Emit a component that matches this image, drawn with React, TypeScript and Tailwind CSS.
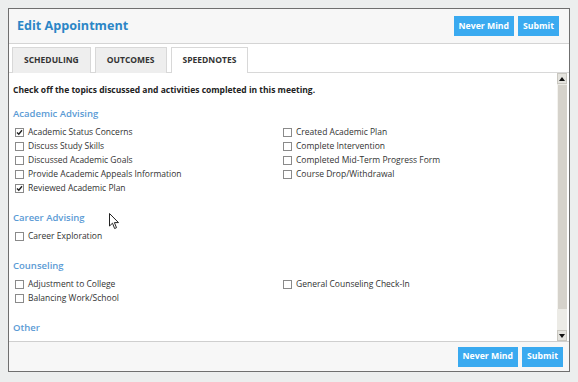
import React from 'react';

type Item = { label: string; checked?: boolean };

const academicLeft: Item[] = [
  { label: 'Academic Status Concerns', checked: true },
  { label: 'Discuss Study Skills' },
  { label: 'Discussed Academic Goals' },
  { label: 'Provide Academic Appeals Information' },
  { label: 'Reviewed Academic Plan', checked: true },
];
const academicRight: Item[] = [
  { label: 'Created Academic Plan' },
  { label: 'Complete Intervention' },
  { label: 'Completed Mid-Term Progress Form' },
  { label: 'Course Drop/Withdrawal' },
];

function Box({ checked }: { checked?: boolean }) {
  return (
    <span className="w-[9px] h-[9px] border border-[#8a8a8a] bg-white flex items-center justify-center shrink-0">
      {checked && (
        <svg width="7" height="7" viewBox="0 0 7 7">
          <path d="M1 3.5 L2.8 5.3 L6 1.3" stroke="#222" strokeWidth="1.4" fill="none" />
        </svg>
      )}
    </span>
  );
}

function Row({ item }: { item: Item }) {
  return (
    <div className="h-[14px] flex items-center gap-[4px]">
      <Box checked={item.checked} />
      <span>{item.label}</span>
    </div>
  );
}

function Section({ title, left, right, first }: { title: string; left: Item[]; right?: Item[]; first?: boolean }) {
  return (
    <div className={first ? 'mt-[10px]' : 'mt-[16px]'}>
      <div className="h-[14px] leading-[14px] text-[#5b9bd5] text-[9.5px] font-semibold">{title}</div>
      {left.length > 0 && (
        <div className="mt-[4px] flex pl-[2px]">
          <div className="w-[268px]">
            {left.map((it) => (
              <Row key={it.label} item={it} />
            ))}
          </div>
          <div>
            {right?.map((it) => (
              <Row key={it.label} item={it} />
            ))}
          </div>
        </div>
      )}
    </div>
  );
}

function BlueButton({ children }: { children: React.ReactNode }) {
  return (
    <button className="h-[20px] px-[5px] bg-[#3aaaf0] text-white text-[8.7px] font-bold leading-none">
      {children}
    </button>
  );
}

export default function App() {
  return (
    <div
      className="w-[578px] h-[382px] bg-[#eceeee] p-[8px] relative"
      style={{ fontFamily: '"Open Sans", "Liberation Sans", sans-serif' }}
    >
      <div className="w-[562px] h-[364px] border border-[#6f6f6f] bg-white flex flex-col">
        {/* Header */}
        <div className="h-[35px] bg-[#f7f7f7] border-b border-[#d4d4d4] flex items-center justify-between pl-[8px] pr-[10px] shrink-0">
          <h1 className="text-[12.6px] font-bold text-[#2b86c6]">Edit Appointment</h1>
          <div className="flex gap-[4px]">
            <BlueButton>Never Mind</BlueButton>
            <BlueButton>Submit</BlueButton>
          </div>
        </div>

        {/* Tabs */}
        <div className="h-[29px] flex items-end gap-[4px] pl-[3px] border-b border-[#d8d8d8] shrink-0">
          {['SCHEDULING', 'OUTCOMES', 'SPEEDNOTES'].map((t, i) => (
            <div
              key={t}
              className={
                'h-[26px] px-[11px] flex items-center text-[8.5px] font-bold text-[#333] border border-b-0 border-[#d8d8d8] -mb-px ' +
                (i === 2 ? 'bg-white' : 'bg-[#eeeeee]')
              }
            >
              {t}
            </div>
          ))}
        </div>

        {/* Content */}
        <div className="flex-1 flex min-h-0">
          <div className="flex-1 pl-[4px] pt-[10px] text-[8.5px] text-[#333] overflow-hidden">
            <div className="h-[14px] leading-[14px] font-bold text-[#222]">
              Check off the topics discussed and activities completed in this meeting.
            </div>
            <Section title="Academic Advising" left={academicLeft} right={academicRight} first />
            <Section title="Career Advising" left={[{ label: 'Career Exploration' }]} />
            <Section
              title="Counseling"
              left={[{ label: 'Adjustment to College' }, { label: 'Balancing Work/School' }]}
              right={[{ label: 'General Counseling Check-In' }]}
            />
            <Section title="Other" left={[]} />
          </div>

          {/* Scrollbar */}
          <div className="w-[10px] mr-[2px] flex flex-col bg-[#ecebe6]">
            <div className="h-[11px] bg-[#e4e3de] border border-[#c9c7c0] flex items-center justify-center">
              <svg width="6" height="4" viewBox="0 0 6 4">
                <path d="M0 4 L3 0 L6 4 Z" fill="#111" />
              </svg>
            </div>
            <div className="mt-[1px] h-[224px] bg-[#d5d2cb] border-l border-[#f4f3ef]" />
            <div className="flex-1" />
            <div className="h-[11px] bg-[#e4e3de] border border-[#c9c7c0] flex items-center justify-center">
              <svg width="6" height="4" viewBox="0 0 6 4">
                <path d="M0 0 L3 4 L6 0 Z" fill="#111" />
              </svg>
            </div>
          </div>
        </div>

        {/* Footer */}
        <div className="h-[30px] bg-[#f7f7f7] border-t border-[#cfcfcf] flex items-center justify-end pr-[6px] gap-[4px] shrink-0">
          <BlueButton>Never Mind</BlueButton>
          <BlueButton>Submit</BlueButton>
        </div>
      </div>

      {/* Mouse cursor */}
      <svg className="absolute left-[109px] top-[213px]" width="11" height="17" viewBox="0 0 11 17">
        <path d="M0.5 0.5 L0.5 13 L3.5 10.2 L5.6 15.5 L7.5 14.7 L5.4 9.6 L9.5 9.6 Z" fill="#fff" stroke="#222" strokeWidth="1" />
      </svg>
    </div>
  );
}
